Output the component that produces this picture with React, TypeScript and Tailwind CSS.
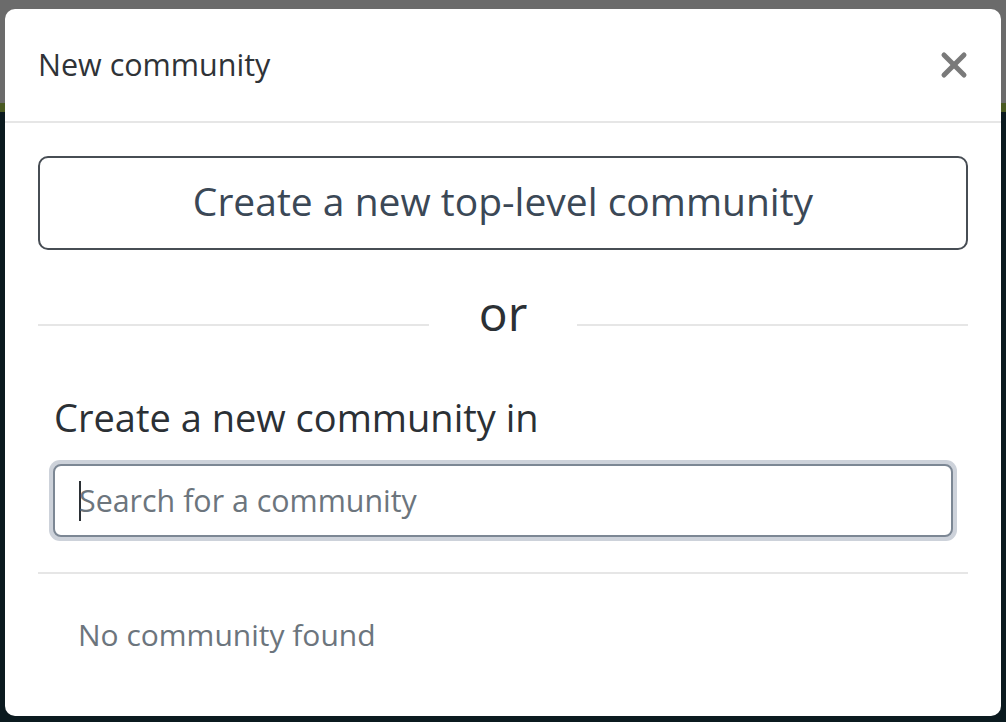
import { X } from 'lucide-react';

const font = { fontFamily: '"Open Sans", "Noto Sans", sans-serif' };

export default function App() {
  return (
    <div className="relative w-[1006px] h-[722px] overflow-hidden bg-[#0b1a1f]" style={font}>
      {/* page behind the backdrop */}
      <div className="h-[103px] bg-[#6b6b6b]" />
      <div className="h-[9px] bg-[#4a5a22]" />

      <div className="absolute left-[5px] top-[9px] w-[996px] h-[707px] bg-white rounded-[10px] flex flex-col">
        <div className="h-[114px] flex items-center justify-between pl-[33px] pr-[27px] border-b-2 border-[#e6e6e6]">
          <h2 className="text-[30.5px] text-[#2f3337] leading-none -mt-[2px]">New community</h2>
          <button className="text-[#7a7a7a]">
            <X className="w-[40px] h-[40px]" strokeWidth={3} />
          </button>
        </div>

        <div className="px-[33px] pt-[33px]">
          <button className="w-full h-[94px] border-2 border-[#474d54] rounded-[10px] text-[39px] text-[#3b4856] pb-[4px]">
            Create a new top-level community
          </button>

          <div className="flex items-center mt-[28px] h-[76px]">
            <div className="flex-1 h-[2px] bg-[#e6e6e6] mt-[18px]" />
            <span className="w-[148px] text-center text-[48px] leading-none text-[#2b3035] pb-[6px]">or</span>
            <div className="flex-1 h-[2px] bg-[#e6e6e6] mt-[18px]" />
          </div>

          <div className="px-4 pt-[44px]">
            <h3 className="text-[38px] leading-none text-[#2b3035]">Create a new community in</h3>
            <div className="mt-[24px] rounded-[11px] p-[4px] -mx-[5px] bg-[#cdd2da]">
              <div className="h-[73px] rounded-[8px] border-2 border-[#7c8794] bg-white flex items-center pl-[24px]">
                <span className="w-[2px] h-[40px] bg-[#2b3035]" />
                <span className="text-[30.4px] text-[#6c757d] -ml-[2px]">Search for a community</span>
              </div>
            </div>
          </div>

          <div className="mt-[31px] h-[2px] bg-[#e6e6e6]" />

          <p className="mt-[46px] pl-[40px] text-[30px] leading-none text-[#6c757d]">No community found</p>
        </div>
      </div>
    </div>
  );
}
